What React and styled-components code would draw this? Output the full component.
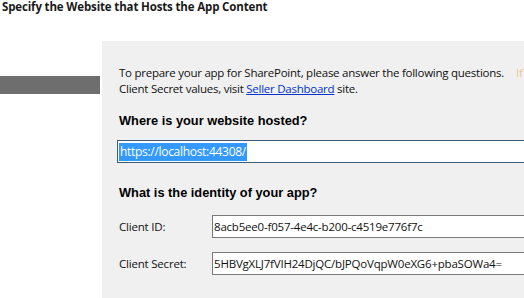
import React from "react";
import styled, { createGlobalStyle } from "styled-components";

const Global = createGlobalStyle`
  html, body { margin: 0; padding: 0; background: #ffffff; overflow: hidden; }
  body { width: 524px; height: 298px; }
`;

const Page = styled.div`
  width: 524px;
  height: 298px;
  display: flex;
  flex-direction: column;
  overflow: hidden;
  font-family: "Open Sans", "Noto Sans", sans-serif;
`;

const Title = styled.div`
  font-family: "Open Sans", sans-serif;
  font-weight: 700;
  font-size: 11.5px;
  letter-spacing: -0.15px;
  color: #1a1a1a;
  line-height: 14px;
  padding: 0 0 0 2px;
  height: 41px;
  box-sizing: border-box;
`;

const Body = styled.div`
  flex: 1;
  display: flex;
  gap: 2px;
`;

const Side = styled.div`
  width: 100px;
  padding-top: 35px;
`;

const Bar = styled.div`
  height: 18px;
  background: #6e6e6e;
`;

const Panel = styled.div`
  flex: 1;
  background: #f0f0f0;
  padding: 24px 0 0 17px;
  overflow: hidden;
  white-space: nowrap;
`;

const Intro = styled.p`
  margin: 0;
  font-size: 11.5px;
  line-height: 16px;
  letter-spacing: -0.25px;
  color: #111;
`;

const Faint = styled.span`
  color: #e8c898;
  margin-left: 12px;
`;

const Link = styled.a`
  color: #0033cc;
  text-decoration: underline;
`;

const Heading = styled.div`
  font-family: "Liberation Sans", Arial, sans-serif;
  font-weight: 700;
  font-size: 12.8px;
  line-height: 15px;
  color: #000;
  margin-top: ${(p) => p.$top}px;
`;

const UrlBox = styled.div`
  margin: 12px 0 0 -2px;
  height: 21px;
  border: 1px solid #3d5a78;
  border-right: none;
  background: #fff;
  display: flex;
  align-items: center;
  padding-left: 1px;
`;

const Selected = styled.span`
  background: #3399ff;
  color: #fff;
  font-size: 12px;
  line-height: 18px;
  padding: 0 1px;
  letter-spacing: -0.3px;
`;

const FieldRow = styled.div`
  display: flex;
  align-items: center;
  margin-top: ${(p) => p.$top}px;
`;

const Label = styled.div`
  width: 93px;
  font-size: 11.5px;
  letter-spacing: -0.2px;
  color: #111;
`;

const Field = styled.div`
  flex: 1;
  height: 21px;
  border: 1px solid #7a7a7a;
  border-right: none;
  background: #fff;
  display: flex;
  align-items: center;
  padding-left: 1px;
  font-size: 11.5px;
  letter-spacing: -0.2px;
  color: #111;
`;

export default function App() {
  return (
    <Page>
      <Global />
      <Title>Specify the Website that Hosts the App Content</Title>
      <Body>
        <Side>
          <Bar />
        </Side>
        <Panel>
          <Intro>
            To prepare your app for SharePoint, please answer the following questions.<Faint>If</Faint>
            <br />
            Client Secret values, visit <Link href="#">Seller Dashboard</Link> site.
          </Intro>
          <Heading $top={16}>Where is your website hosted?</Heading>
          <UrlBox>
            <Selected>https://localhost:44308/</Selected>
          </UrlBox>
          <Heading $top={22}>What is the identity of your app?</Heading>
          <FieldRow $top={15}>
            <Label>Client ID:</Label>
            <Field>8acb5ee0-f057-4e4c-b200-c4519e776f7c</Field>
          </FieldRow>
          <FieldRow $top={14}>
            <Label>Client Secret:</Label>
            <Field>5HBVgXLJ7fVIH24DjQC/bJPQoVqpW0eXG6+pbaSOWa4=</Field>
          </FieldRow>
        </Panel>
      </Body>
    </Page>
  );
}
